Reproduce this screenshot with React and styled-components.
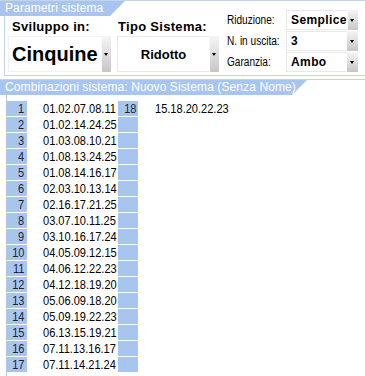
import React from 'react';
import styled, { createGlobalStyle } from 'styled-components';

const BLUE = '#a8c5f0';
const LINE = '#c6d4ea';

const Global = createGlobalStyle`
  html, body { margin: 0; padding: 0; background: #fff; }
  body { width: 365px; height: 376px; overflow: hidden; font-family: "Liberation Sans", Arial, sans-serif; }
`;

const Page = styled.div`
  width: 365px;
  height: 376px;
  background: #fff;
  overflow: hidden;
`;

/* condensed rendering of a text run (the reference font is a narrow face) */
const Narrow = styled.span`
  display: inline-block;
  white-space: nowrap;
  transform: scaleX(${(p) => p.$s || 0.85});
  transform-origin: ${(p) => p.$origin || 'left'} center;
`;

const ParamSection = styled.section`
  display: grid;
  grid-template-columns: 222px 1fr;
  border-top: 1px solid ${LINE};
`;

const Tab = styled.div`
  box-sizing: border-box;
  height: 15px;
  width: ${(p) => p.$w}px;
  background: ${BLUE};
  clip-path: polygon(0 0, 100% 0, calc(100% - 15px) 100%, 0 100%);
  color: #fff;
  font-family: "Liberation Sans", Arial, sans-serif;
  font-size: 12px;
  letter-spacing: 0.1px;
  line-height: 15px;
  padding-left: 5px;
  white-space: nowrap;
`;

const LeftCol = styled.div`
  display: flex;
  flex-direction: column;
`;

const GroupsRow = styled.div`
  flex: 1;
  margin-left: 4px;
  border-left: 1px solid ${LINE};
  border-bottom: 1px solid ${LINE};
  display: flex;
`;

const Group = styled.div`
  display: flex;
  flex-direction: column;
  width: ${(p) => p.$w}px;
  padding-left: ${(p) => p.$pl}px;
  box-sizing: border-box;
`;

const GroupLabel = styled.div`
  height: 20px;
  line-height: 21px;
  font-size: 13px;
  font-weight: bold;
  letter-spacing: 0.3px;
  color: #000;
  padding-left: ${(p) => p.$pl}px;
  white-space: nowrap;
`;

const BigSelect = styled.div`
  display: flex;
  height: 36px;
  width: ${(p) => p.$w}px;
`;

const BigValue = styled.div`
  flex: 1;
  box-sizing: border-box;
  border: 1px solid ${(p) => (p.$center ? '#e6e8ec' : '#f1f2f4')};
  border-right: none;
  background: #fff;
  display: flex;
  align-items: center;
  justify-content: ${(p) => (p.$center ? 'center' : 'flex-start')};
  padding-left: ${(p) => (p.$center ? 0 : 3)}px;
  font-weight: bold;
  font-size: ${(p) => p.$size}px;
  color: #000;
  white-space: nowrap;
`;

const ArrowButton = styled.div`
  width: ${(p) => p.$w}px;
  align-self: stretch;
  background: linear-gradient(to bottom, #f5f5f5 0%, #dcdcdc 55%, #c6c6c6 100%);
  box-shadow: inset 1px 0 0 #fafafa;
  display: flex;
  align-items: center;
  justify-content: center;
  &::after {
    content: '';
    width: 0;
    height: 0;
    border-left: 2.5px solid transparent;
    border-right: 2.5px solid transparent;
    border-top: 3px solid #000;
  }
`;

const RightCol = styled.div`
  border-bottom: 1px solid ${LINE};
  padding: 9px 0 3px 5px;
  display: grid;
  grid-template-columns: 59px 72px;
  grid-auto-rows: 20px;
  row-gap: 1px;
  align-content: start;
`;

const SmallLabel = styled.div`
  font-size: 12px;
  line-height: 20px;
  color: #000;
  white-space: nowrap;
`;

const SmallSelect = styled.div`
  display: flex;
  height: 20px;
`;

const SmallValue = styled.div`
  flex: 1;
  box-sizing: border-box;
  border: 1px solid #e6e8ec;
  border-right: none;
  padding-left: 4px;
  font-weight: bold;
  font-size: 12px;
  letter-spacing: 0.4px;
  line-height: 18px;
  color: #000;
  white-space: nowrap;
`;

const ComboSection = styled.section`
  margin-top: 3px;
  border-top: 1px solid ${LINE};
`;

const List = styled.div`
  margin-left: 6px;
  border-left: 1px solid #b9c6da;
  padding-top: 6px;
  display: grid;
  row-gap: 1px;
  height: 277px;
  align-content: start;
`;

const Row = styled.div`
  display: grid;
  grid-template-columns: 20px 91px 20px 1fr;
  height: 15px;
  font-size: 13px;
  line-height: 15px;
  color: #000;
`;

const NumCell = styled.div`
  background: ${BLUE};
  text-align: right;
  padding-right: ${(p) => p.$pr}px;
  color: #1c2433;
`;

const Combo = styled.div`
  padding-left: ${(p) => p.$pl}px;
  white-space: nowrap;
`;

const rows = [
  '01.02.07.08.11',
  '01.02.14.24.25',
  '01.03.08.10.21',
  '01.08.13.24.25',
  '01.08.14.16.17',
  '02.03.10.13.14',
  '02.16.17.21.25',
  '03.07.10.11.25',
  '03.10.16.17.24',
  '04.05.09.12.15',
  '04.06.12.22.23',
  '04.12.18.19.20',
  '05.06.09.18.20',
  '05.09.19.22.23',
  '06.13.15.19.21',
  '07.11.13.16.17',
  '07.11.14.21.24',
];

const extra = { 0: { n: '18', c: '15.18.20.22.23' } };

const params = [
  { label: 'Riduzione:', value: 'Semplice' },
  { label: 'N. in uscita:', value: '3' },
  { label: 'Garanzia:', value: 'Ambo' },
];

export default function App() {
  return (
    <Page>
      <Global />
      <ParamSection>
        <LeftCol>
          <Tab $w={125}>Parametri sistema</Tab>
          <GroupsRow>
            <Group $w={112} $pl={3}>
              <GroupLabel $pl={4}>Sviluppo in:</GroupLabel>
              <BigSelect $w={103}>
                <BigValue $size={20}>Cinquine</BigValue>
                <ArrowButton $w={10} />
              </BigSelect>
            </Group>
            <Group $w={102} $pl={0}>
              <GroupLabel $pl={1}>Tipo Sistema:</GroupLabel>
              <BigSelect $w={102}>
                <BigValue $size={13} $center>Ridotto</BigValue>
                <ArrowButton $w={10} />
              </BigSelect>
            </Group>
          </GroupsRow>
        </LeftCol>
        <RightCol>
          {params.map((p) => (
            <React.Fragment key={p.label}>
              <SmallLabel>
                <Narrow $s={0.84}>{p.label}</Narrow>
              </SmallLabel>
              <SmallSelect>
                <SmallValue>{p.value}</SmallValue>
                <ArrowButton $w={12} />
              </SmallSelect>
            </React.Fragment>
          ))}
        </RightCol>
      </ParamSection>
      <ComboSection>
        <Tab $w={307}>Combinazioni sistema: Nuovo Sistema (Senza Nome)</Tab>
        <List>
          {rows.map((r, i) => (
            <Row key={i}>
              <NumCell $pr={3}>
                <Narrow $origin="right">{i + 1}</Narrow>
              </NumCell>
              <Combo $pl={16}>
                <Narrow>{r}</Narrow>
              </Combo>
              <NumCell $pr={2}>
                {extra[i] ? <Narrow $origin="right">{extra[i].n}</Narrow> : null}
              </NumCell>
              <Combo $pl={17}>
                {extra[i] ? <Narrow>{extra[i].c}</Narrow> : null}
              </Combo>
            </Row>
          ))}
        </List>
      </ComboSection>
    </Page>
  );
}
